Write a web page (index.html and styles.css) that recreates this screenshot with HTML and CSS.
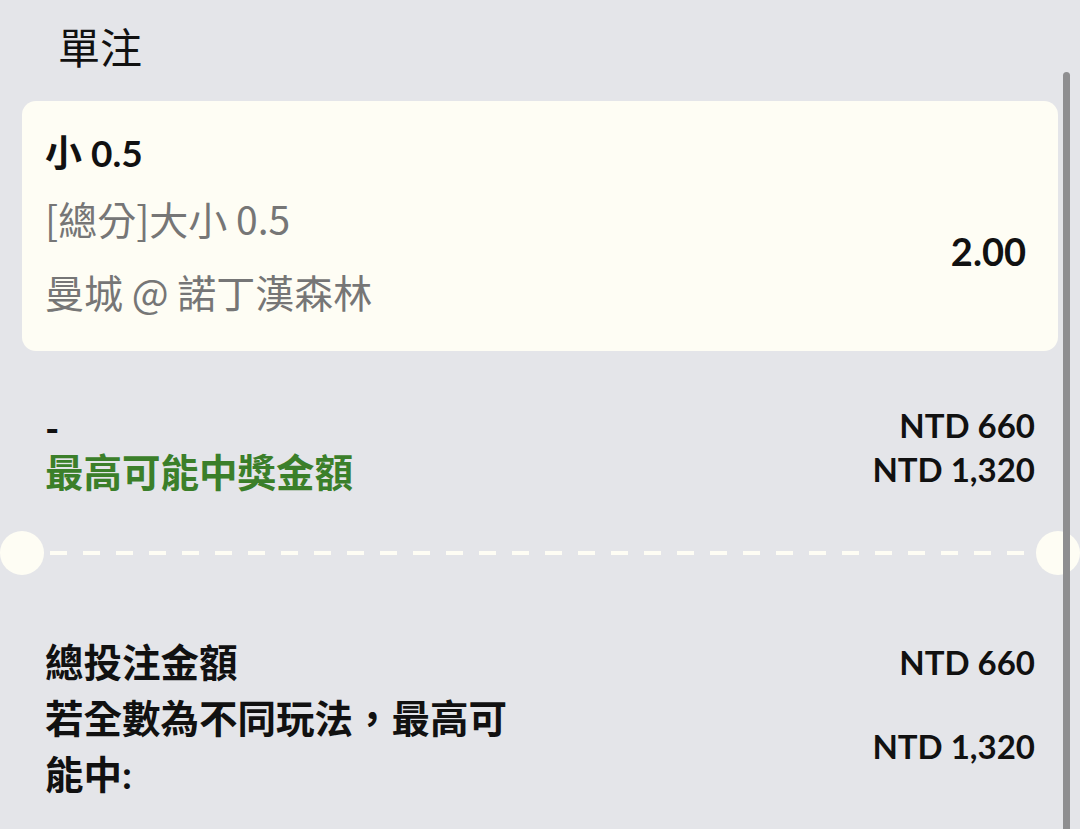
FILE: index.html
```html
<!DOCTYPE html>
<html lang="zh-Hant">
<head>
    <meta charset="UTF-8">
    <meta name="viewport" content="width=device-width, initial-scale=1.0">
    <title>單注</title>
    <link rel="stylesheet" href="styles.css">
</head>
<body>

<div class="slip">
    <h1 class="slip-title">單注</h1>

    <div class="bet-card">
        <div class="bet-info">
            <div class="bet-pick">小 0.5</div>
            <div class="bet-market">[總分]大小 0.5</div>
            <div class="bet-match">曼城 @ 諾丁漢森林</div>
        </div>
        <div class="bet-odds">2.00</div>
    </div>

    <div class="bet-summary">
        <div class="summary-labels">
            <div class="stake-label">-</div>
            <div class="win-label">最高可能中獎金額</div>
        </div>
        <div class="summary-values">
            <div>NTD 660</div>
            <div>NTD 1,320</div>
        </div>
    </div>

    <div class="ticket-divider"></div>

    <div class="totals">
        <div class="total-row">
            <div class="total-label">總投注金額</div>
            <div class="total-value">NTD 660</div>
        </div>
        <div class="total-row">
            <div class="total-label">若全數為不同玩法，最高可能中:</div>
            <div class="total-value">NTD 1,320</div>
        </div>
    </div>

    <div class="scroll-thumb"></div>
</div>

</body>
</html>
```

FILE: styles.css
```css
body {
    margin: 0;
    background-color: #e4e5e9;
    font-family: Lato, "Noto Sans CJK TC", sans-serif;
    color: #111;
    overflow: hidden;
}

.slip {
    position: relative;
    width: 1080px;
    height: 829px;
    overflow: hidden;
}

.slip-title {
    margin: 0;
    padding: 24px 0 0 58px;
    height: 101px;
    box-sizing: border-box;
    font-size: 42px;
    font-weight: 400;
    line-height: 48px;
}

.bet-card {
    margin: 0 22px;
    height: 250px;
    box-sizing: border-box;
    padding: 26px 32px 35px 23px;
    background-color: #fefdf4;
    border-radius: 14px;
    display: flex;
    justify-content: space-between;
    align-items: center;
}

.bet-info {
    display: flex;
    flex-direction: column;
    line-height: 50px;
}

.bet-pick {
    font-size: 37px;
    font-weight: 700;
}

.bet-market,
.bet-match {
    font-family: "Noto Sans CJK TC", sans-serif;
    font-size: 39px;
    color: #767676;
}

.bet-market {
    margin-top: 15px;
}

.bet-match {
    margin-top: 23px;
}

.bet-odds {
    margin-top: 58px;
    font-size: 38px;
    font-weight: 700;
}

.bet-summary {
    display: flex;
    justify-content: space-between;
    padding: 0 45px;
    margin-top: 52px;
    font-weight: 700;
}

.summary-labels {
    display: flex;
    flex-direction: column;
    padding-top: 3px;
    font-size: 38.5px;
    line-height: 44px;
}

.win-label {
    color: #3b7f2a;
}

.summary-values {
    display: flex;
    flex-direction: column;
    align-items: flex-end;
    font-size: 33px;
    line-height: 44px;
}

.ticket-divider {
    position: relative;
    margin: 57px 50px 0;
    height: 4px;
    background-image: linear-gradient(to right, #fefdf4 17px, transparent 17px);
    background-size: 33px 4px;
}

.ticket-divider::before,
.ticket-divider::after {
    content: "";
    position: absolute;
    top: -20px;
    width: 44px;
    height: 44px;
    border-radius: 50%;
    background-color: #fefdf4;
}

.ticket-divider::before {
    left: -50px;
}

.ticket-divider::after {
    right: -50px;
}

.totals {
    padding: 79px 45px 0;
    font-weight: 700;
}

.total-row {
    display: flex;
    justify-content: space-between;
    align-items: center;
}

.total-label {
    width: 480px;
    font-size: 38.5px;
    line-height: 56px;
}

.total-value {
    font-size: 33px;
}

.scroll-thumb {
    position: absolute;
    top: 72px;
    right: 10px;
    width: 7px;
    height: 800px;
    border-radius: 4px;
    background-color: #8e8e90;
}
```
